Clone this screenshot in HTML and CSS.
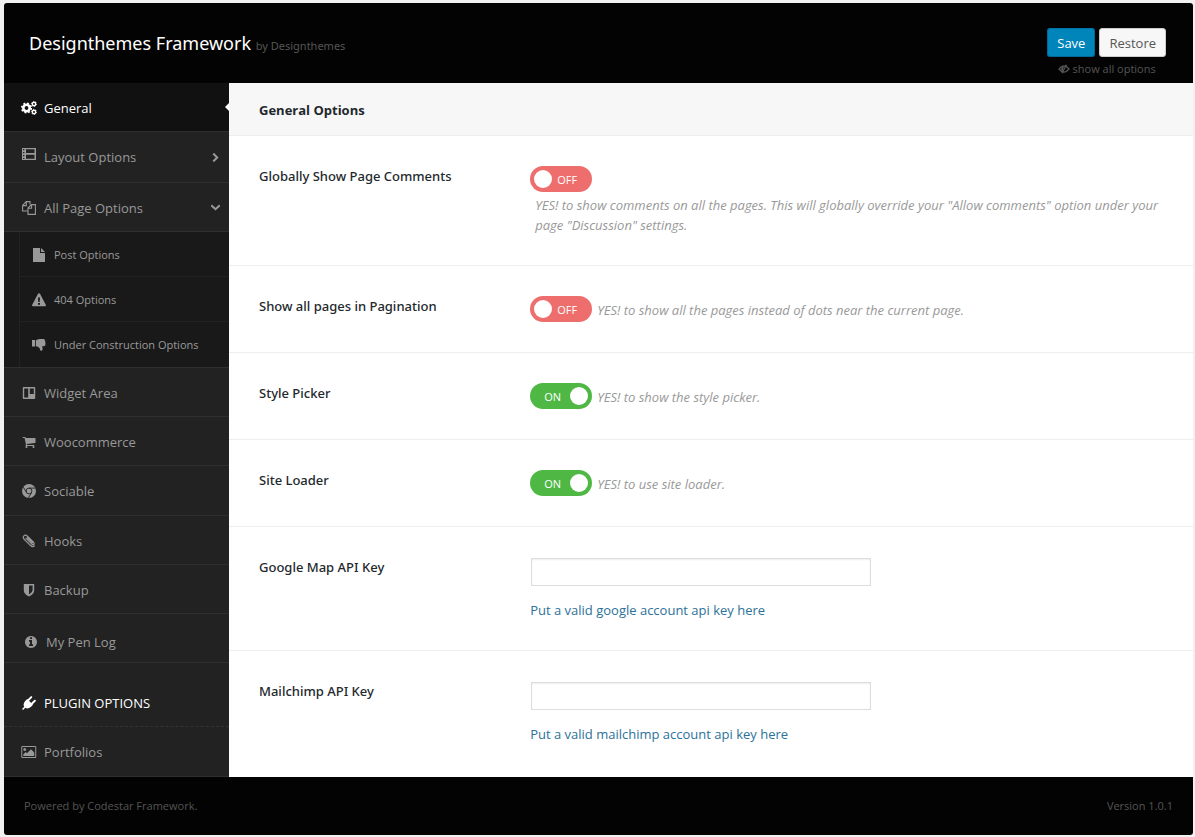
FILE: index.html
```html
<!DOCTYPE html>
<html lang="en">
<head>
  <meta charset="UTF-8">
  <meta name="viewport" content="width=device-width, initial-scale=1.0">
  <title>Designthemes Framework</title>
  <link rel="stylesheet" href="styles.css">
</head>
<body>
  <div class="framework">
    <header class="header">
      <h1>Designthemes Framework <small>by Designthemes</small></h1>
      <div class="actions">
        <div class="buttons">
          <button type="button" class="btn btn-primary">Save</button>
          <button type="button" class="btn">Restore</button>
        </div>
        <a href="#" class="show-all">
          <svg class="icon-eye" viewBox="0 0 16 14"><path fill="none" stroke="currentColor" stroke-width="1.800" d="M1 7q7-9 14 0q-7 9-14 0zM11.500 1L5 13"/><path fill="currentColor" d="M8 3a4 4 0 0 0-2 7.500z"/></svg>
          show all options
        </a>
      </div>
    </header>

    <div class="body">
      <nav class="nav">
        <ul>
          <li><a href="#" class="active">
            <svg class="icon icon-wide" viewBox="0 0 16 14"><g fill="none" stroke="currentColor"><circle cx="5.500" cy="7" r="3.200" stroke-width="2.600"/><circle cx="5.500" cy="7" r="4.800" stroke-width="1.600" stroke-dasharray="1.900 1.870"/><circle cx="13" cy="3" r="1.700" stroke-width="1.400"/><circle cx="13" cy="3" r="2.600" stroke-width=".9" stroke-dasharray="1.200 1.520"/><circle cx="13" cy="11" r="1.700" stroke-width="1.400"/><circle cx="13" cy="11" r="2.600" stroke-width=".9" stroke-dasharray="1.200 1.520"/></g></svg>
            General</a></li>
          <li><a href="#" class="tall">
            <svg class="icon icon-raised" viewBox="0 0 14 14"><path fill="currentColor" fill-rule="evenodd" d="M0 1h14v12H0zM1 2v1.200h1.400V2zm0 3v1.200h1.400V5zm0 3v1.200h1.400V8zm0 3v1h1.400v-1zM4 2.200V6h8.500V2.200zm0 5.600v4h8.500v-4z"/></svg>
            Layout Options
            <svg class="arrow" viewBox="0 0 8 8"><path fill="none" stroke="currentColor" stroke-width="1.800" d="M2 .5L5.500 4L2 7.500"/></svg></a></li>
          <li><a href="#">
            <svg class="icon" viewBox="0 0 14 14"><path fill="none" stroke="currentColor" stroke-width="1.100" d="M5.500 10H.6V4.500L4.200.6H8V3.500M4.300.6V4.600H.6M6 13.400V7L9.500 3.600h3.900v9.800zM9.600 3.600V7.200H6"/></svg>
            All Page Options
            <svg class="arrow" viewBox="0 0 8 8"><path fill="none" stroke="currentColor" stroke-width="1.800" d="M.2 2L4 5.500L7.800 2"/></svg></a>
            <ul class="sub">
              <li><a href="#">
                <svg class="icon" viewBox="0 0 14 14"><path fill="currentColor" d="M1 0h7v5h5v9H1zM9 0l4 4H9z"/></svg>
                Post Options</a></li>
              <li><a href="#">
                <svg class="icon" viewBox="0 0 14 14"><path fill="currentColor" fill-rule="evenodd" d="M7 .2q.7 0 1 .6L13.900 12q.3 1.200-.9 1.200H1q-1.200 0-.9-1.200L6 .8q.3-.6 1-.6zM6 4.500l.3 4.500h1.400L8 4.500zM6 10v1.800h2V10z"/></svg>
                404 Options</a></li>
              <li><a href="#">
                <svg class="icon" viewBox="0 0 14 14"><path fill="currentColor" d="M0 2h3.200v6.500H0zM4 2.200Q6 1 8.500 1H12q1 .5.800 1.500.8.800.4 1.700.7.900.2 1.900.4 2-1.400 2.100h-2q1 2 .5 3.500-.5 1.500-2 1L7.500 10Q6 8.500 4 8.200z"/></svg>
                Under Construction Options</a></li>
            </ul>
          </li>
          <li><a href="#">
            <svg class="icon" viewBox="0 0 14 14"><path fill="currentColor" fill-rule="evenodd" d="M1.500 1h11q.7 0 .7.700v10.600q0 .7-.7.700h-11q-.7 0-.7-.700V1.700q0-.7.700-.700zM2.200 2.500v9h4v-9zm5.600 0v5.500h4V2.500z"/></svg>
            Widget Area</a></li>
          <li><a href="#">
            <svg class="icon" viewBox="0 0 1792 1792"><path fill="currentColor" d="M704 1536q0 52-38 90t-90 38-90-38-38-90 38-90 90-38 90 38 38 90zm896 0q0 52-38 90t-90 38-90-38-38-90 38-90 90-38 90 38 38 90zm128-1088v512q0 24-16.500 42.500t-40.500 21.500l-1044 122q13 60 13 70 0 16-24 64h920q26 0 45 19t19 45-19 45-45 19h-1024q-26 0-45-19t-19-45q0-11 8-31.500t16-36 21.500-40 15.500-29.500l-177-823h-204q-26 0-45-19t-19-45 19-45 45-19h256q16 0 28.500 6.500t19.500 15.500 13 24.500 8 26 5.500 29.500 4.500 26h1201q26 0 45 19t19 45z"/></svg>
            Woocommerce</a></li>
          <li><a href="#" class="medium">
            <svg class="icon" viewBox="0 0 14 14"><circle cx="7" cy="7" r="7" fill="currentColor"/><g fill="none" stroke="#222" stroke-width=".9"><circle cx="7" cy="7" r="2.900"/><path d="M7 4.100h6.500M4.400 8.300L1.300 3.200M9.500 8.500L6.400 14"/></g></svg>
            Sociable</a></li>
          <li><a href="#">
            <svg class="icon" viewBox="0 0 14 14"><path fill="none" stroke="currentColor" stroke-width="1.200" stroke-linecap="round" d="M4 4.200l6 6q1.200.9 1.900.2t-.2-1.900L5.200 2Q3.300.4 1.900 1.800T2 5l6.300 6.300q2.300 2.200 4 .7M5.500 3.800l5 5"/></svg>
            Hooks</a></li>
          <li><a href="#">
            <svg class="icon" viewBox="0 0 14 14"><path fill="currentColor" fill-rule="evenodd" d="M1.800 1h10.400v6.500q0 3.500-5.200 6-5.200-2.500-5.200-6zM7 2.600v8.900q3.600-2 3.600-4.200V2.600z"/></svg>
            Backup</a></li>
          <li><a href="#" class="log">
            <svg class="icon" viewBox="0 0 1792 1792"><path fill="currentColor" d="M1152 1376v-160q0-14-9-23t-23-9h-96v-512q0-14-9-23t-23-9h-320q-14 0-23 9t-9 23v160q0 14 9 23t23 9h96v320h-96q-14 0-23 9t-9 23v160q0 14 9 23t23 9h448q14 0 23-9t9-23zm-128-896v-160q0-14-9-23t-23-9h-192q-14 0-23 9t-9 23v160q0 14 9 23t23 9h192q14 0 23-9t9-23zm640 416q0 209-103 385.500t-279.500 279.500-385.500 103-385.500-103-279.500-279.500-103-385.500 103-385.500 279.500-279.500 385.500-103 385.500 103 279.500 279.500 103 385.500z"/></svg>
            My Pen Log</a></li>
          <li class="nav-title">
            <svg class="icon" viewBox="0 0 14 14"><path fill="currentColor" d="M3 5.200L5.200 3 11 8.800l-2.200 2.200q-3 2.300-5.500.8L1.100 14 0 12.900l2.200-2.200Q.7 8.200 3 5.200z"/><path fill="none" stroke="currentColor" stroke-width="1.900" stroke-linecap="round" d="M6 4.500L9.300 1.100M9.500 8L12.900 4.700"/></svg>
            PLUGIN OPTIONS</li>
          <li><a href="#" class="medium">
            <svg class="icon icon-wide" viewBox="-32 0 1920 1792"><path fill="currentColor" d="M576 576q0 80-56 136t-136 56-136-56-56-136 56-136 136-56 136 56 56 136zm1024 384v448h-1408v-192l320-320 160 160 512-512zm96-704h-1600q-13 0-22.500 9.500t-9.500 22.500v1216q0 13 9.500 22.500t22.500 9.500h1600q13 0 22.500-9.500t9.500-22.500v-1216q0-13-9.500-22.500t-22.500-9.500zm160 32v1216q0 66-47 113t-113 47h-1600q-66 0-113-47t-47-113v-1216q0-66 47-113t113-47h1600q66 0 113 47t47 113z"/></svg>
            Portfolios</a></li>
        </ul>
      </nav>

      <main class="content">
        <h2>General Options</h2>
        <div class="field">
          <label class="field-title" for="comments">Globally Show Page Comments</label>
          <div class="fieldset">
            <label class="switch"><input type="checkbox" id="comments"><span class="on">ON</span><span class="off">OFF</span></label>
            <p class="desc">YES! to show comments on all the pages. This will globally override your "Allow comments" option under your page "Discussion" settings.</p>
          </div>
        </div>
        <div class="field">
          <label class="field-title" for="pagination">Show all pages in Pagination</label>
          <div class="fieldset">
            <label class="switch"><input type="checkbox" id="pagination"><span class="on">ON</span><span class="off">OFF</span></label>
            <p class="desc">YES! to show all the pages instead of dots near the current page.</p>
          </div>
        </div>
        <div class="field">
          <label class="field-title" for="picker">Style Picker</label>
          <div class="fieldset">
            <label class="switch"><input type="checkbox" id="picker" checked><span class="on">ON</span><span class="off">OFF</span></label>
            <p class="desc">YES! to show the style picker.</p>
          </div>
        </div>
        <div class="field">
          <label class="field-title" for="loader">Site Loader</label>
          <div class="fieldset">
            <label class="switch"><input type="checkbox" id="loader" checked><span class="on">ON</span><span class="off">OFF</span></label>
            <p class="desc">YES! to use site loader.</p>
          </div>
        </div>
        <div class="field">
          <label class="field-title" for="google">Google Map API Key</label>
          <div class="fieldset fieldset-text">
            <input type="text" id="google">
            <a href="#">Put a valid google account api key here</a>
          </div>
        </div>
        <div class="field">
          <label class="field-title" for="mailchimp">Mailchimp API Key</label>
          <div class="fieldset fieldset-text">
            <input type="text" id="mailchimp">
            <a href="#">Put a valid mailchimp account api key here</a>
          </div>
        </div>
      </main>
    </div>

    <footer class="footer">
      <span>Powered by Codestar Framework.</span>
      <span>Version 1.0.1</span>
    </footer>
  </div>
</body>
</html>
```

FILE: styles.css
```css
* { box-sizing: border-box; }
body { margin: 0; padding: 3px 2px 2px 4px; background: #f1f1f1; color: #23282d; font: 13px/20px "Open Sans", "Noto Sans", sans-serif; }
ul { list-style: none; margin: 0; padding: 0; }
a { text-decoration: none; }
.framework { background: #030303; border-radius: 3px; overflow: hidden; }

.header { display: flex; justify-content: space-between; align-items: flex-start; padding: 25px 27px 5px 25px; }
.header h1 { margin: 0; color: #fff; font-family: "Noto Sans", sans-serif; font-size: 18px; line-height: 30px; font-weight: 400; }
.header small { color: #555; font-size: 11px; }
.actions { display: flex; flex-direction: column; align-items: center; }
.buttons { display: flex; gap: 4px; }
.btn { height: 29px; padding: 0 9px; border: 1px solid #ccc; border-radius: 3px; background: #f7f7f7; color: #555; font: inherit; cursor: pointer; }
.btn-primary { border-color: #0073aa #006799 #006799; background: #0085ba; color: #fff; }
.show-all { display: flex; align-items: center; gap: 3px; margin-top: 3px; color: #555; font-size: 11px; line-height: 18px; }
.icon-eye { width: 12px; height: 10px; }

.body { display: flex; background: #fff; }
.nav { flex: 0 0 225px; background: #222; }
.nav a { position: relative; display: flex; align-items: center; gap: 8px; height: 49px; padding: 1px 9px 0 18px; border-bottom: 1px solid #2f2f2f; color: #999; }
.nav .tall { height: 51px; padding-top: 0; }
.nav .medium { height: 50px; }
.nav .log { padding: 8px 0 0 20px; }
.nav .active { background: #111; color: #fff; }
.nav .active::after { content: ""; position: absolute; right: 0; top: 20px; border: 4px solid transparent; border-left: 0; border-right-color: #fff; }
.icon { flex: none; width: 14px; height: 14px; }
.icon-wide { width: 16px; margin: 0 -1px; }
.icon-raised { margin-bottom: 6px; }
.arrow { width: 9px; height: 9px; margin-left: auto; }
.sub { background: #191919; border-bottom: 1px solid #2f2f2f; }
.sub li { margin-left: 15px; border-left: 1px solid #222; }
.nav .sub a { height: 45px; padding: 1px 0 0 12px; border-color: #222; font-size: 11px; }
.sub li:last-child a { border-bottom: 0; }
.nav-title { display: flex; align-items: center; gap: 8px; height: 64px; padding: 17px 18px 0; border-bottom: 1px dashed #333; color: #fff; }

.content { flex: 1; min-width: 0; }
.content h2 { margin: 0; padding: 17px 30px 15px; background: #f7f7f7; border-bottom: 1px solid #eee; font-size: 13px; line-height: 20px; font-weight: 700; }
.field { display: flex; padding: 30px; border-bottom: 1px solid #eee; }
.field:last-child { border-bottom: 0; }
.field-title { flex: 0 0 30%; font-family: "Noto Sans", sans-serif; font-weight: 500; }
.fieldset { flex: 1; display: flex; flex-wrap: wrap; align-items: center; row-gap: 1px; }
.desc { margin: 0 0 0 5px; padding-top: 2px; color: #999; font-size: 13px; font-style: italic; }
.switch { position: relative; display: block; width: 62px; height: 26px; color: #fff; font-size: 11px; line-height: 27px; cursor: pointer; }
.switch input { appearance: none; display: block; width: 62px; height: 26px; margin: 0; border-radius: 13px; background: #ee6e6e; cursor: pointer; }
.switch input:checked { background: #4fb845; }
.switch input::before { content: ""; position: absolute; top: 4px; left: 4px; width: 18px; height: 18px; border-radius: 50%; background: #fff; }
.switch input:checked::before { left: 40px; }
.switch span { position: absolute; top: 0; }
.switch .on { left: 14px; display: none; }
.switch .off { left: 27px; }
.switch input:checked ~ .on { display: block; }
.switch input:checked ~ .off { display: none; }
.fieldset-text { display: block; }
.fieldset-text input { display: block; width: 340px; max-width: 100%; height: 28px; margin: 1px 1px 14px; padding: 3px 5px; border: 1px solid #ddd; box-shadow: inset 0 1px 2px rgba(0,0,0,0.07); font: inherit; }
.fieldset-text a { display: block; color: #2b7199; }

.footer { display: flex; justify-content: space-between; padding: 19px 20px; color: #555; font-size: 11px; }
```
